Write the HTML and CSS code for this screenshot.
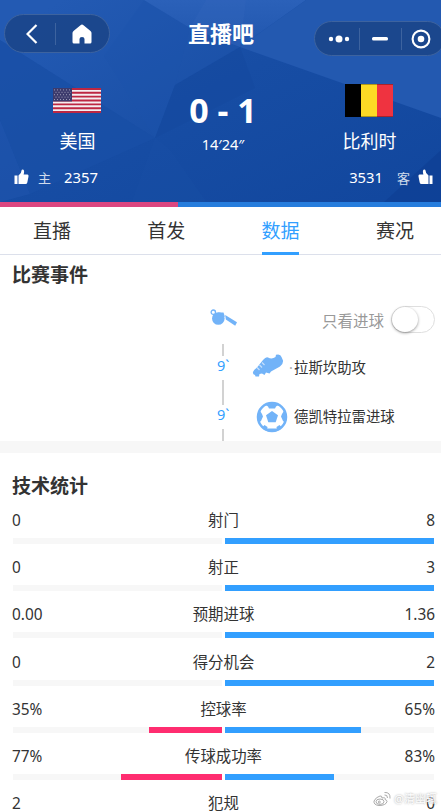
FILE: index.html
```html
<!DOCTYPE html>
<html lang="zh-CN">
<head>
    <meta charset="UTF-8">
    <meta name="viewport" content="width=device-width, initial-scale=1.0">
    <title>直播吧 - 美国 vs 比利时</title>
    <link rel="stylesheet" href="styles.css">
</head>
<body>
    <header class="header">
        <svg class="header-bg" viewBox="0 0 441 207" preserveAspectRatio="none">
            <defs>
                <linearGradient id="bg" x1="0" y1="0" x2="1" y2="1">
                    <stop offset="0" stop-color="#1e55ae"/>
                    <stop offset="0.45" stop-color="#174da4"/>
                    <stop offset="1" stop-color="#11469d"/>
                </linearGradient>
                <linearGradient id="shine" x1="0" y1="0" x2="0" y2="1">
                    <stop offset="0" stop-color="#2b61b9"/>
                    <stop offset="1" stop-color="#2056ae"/>
                </linearGradient>
                <linearGradient id="left" gradientUnits="userSpaceOnUse" x1="60" y1="0" x2="150" y2="140">
                    <stop offset="0" stop-color="#235ab3"/>
                    <stop offset="1" stop-color="#1a50a7"/>
                </linearGradient>
            </defs>
            <rect width="441" height="207" fill="url(#bg)"/>
            <path d="M0 0H144L240 47 175 85 155 138 0 40z" fill="url(#left)"/>
            <path d="M0 40L155 138 30 194 0 120z" fill="#1a50a7" opacity=".7"/>
            <path d="M0 120L30 194 0 202z" fill="#1f55ad" opacity=".6"/>
            <path d="M155 138L104 56 144 0 190 28 175 85z" fill="#1d53ab" opacity=".35"/>
            <path d="M144 0H306L240 47 190 28z" fill="url(#shine)"/>
            <path d="M206 0H246L240 47 190 28z" fill="#3468bd" opacity=".3"/>
            <path d="M306 0H441V118L240 47z" fill="#2359b0"/>
            <path d="M240 47L175 85 155 138 255 88z" fill="#13489e" opacity=".5"/>
            <path d="M155 138L130 207H210L170 150z" fill="#245aae" opacity=".12"/>
            <path d="M441 150L384 202H441z" fill="#0d3d92" opacity=".6"/>
        </svg>

        <div class="topbar">
            <div class="pill pill-left">
                <svg width="12" height="20" viewBox="0 0 12 20"><path d="M10.5 1L1.5 10l9 9" fill="none" stroke="#fff" stroke-width="2.2"/></svg>
                <i class="pill-line"></i>
                <svg width="20" height="20" viewBox="0 0 20 20"><path d="M10 .5q.8 0 1.5.7l7 5.8q1 .8 1 2V18q0 1.500-1.500 1.500H12.500V15q0-2-2.500-2t-2.500 2v4.500H2Q.5 19.500.5 18V9q0-1.200 1-2l7-5.800Q9.200.5 10 .5z" fill="#fff"/></svg>
            </div>
            <div class="logo">直播吧</div>
            <div class="pill pill-right">
                <svg width="22" height="10" viewBox="0 0 22 10"><circle cx="3" cy="5" r="2.200" fill="#fff"/><circle cx="11" cy="5" r="3.500" fill="#fff"/><circle cx="19" cy="5" r="2.200" fill="#fff"/></svg>
                <i class="pill-line"></i>
                <svg width="16" height="4" viewBox="0 0 16 4"><rect width="16" height="3.600" rx="1.500" fill="#fff"/></svg>
                <i class="pill-line"></i>
                <svg width="20" height="20" viewBox="0 0 20 20"><circle cx="10" cy="10" r="8.400" fill="none" stroke="#fff" stroke-width="2.100"/><circle cx="10" cy="10" r="3.300" fill="#fff"/></svg>
            </div>
        </div>

        <div class="match">
            <div class="team">
                <div class="flag">
                    <svg width="48" height="25" viewBox="0 0 48 26" preserveAspectRatio="none">
                        <rect width="48" height="26" fill="#f5eef0"/>
                        <path d="M0 1H48M0 5H48M0 9H48M0 13H48M0 17H48M0 21H48M0 25H48" stroke="#bd2742" stroke-width="2"/>
                        <rect width="19" height="14" fill="#3d3b6d"/>
                        <path d="M1 2H18M2.500 4.500H18M1 7H18M2.500 9.500H18M1 12H18" stroke="#a19fba" stroke-width="1" stroke-dasharray="1 2"/>
                    </svg>
                </div>
                <div class="team-name">美国</div>
            </div>
            <div class="score-box">
                <div class="score">0 - 1</div>
                <div class="clock">14′24″</div>
            </div>
            <div class="team">
                <div class="flag">
                    <svg width="48" height="33" viewBox="0 0 48 33"><path d="M0 0H16V33H0z" fill="#000"/><path d="M16 0H32V33H16z" fill="#fdda25"/><path d="M32 0H48V33H32z" fill="#ef3340"/><path d="M0 .5H48M0 32.500H48" stroke="#000" opacity=".3"/></svg>
                </div>
                <div class="team-name">比利时</div>
            </div>
        </div>

        <div class="votes">
            <div class="vote">
                <svg width="15" height="16" viewBox="0 0 15 16"><path d="M.5 6.500H3.500V15H.5zM4.500 6.500Q7.500 4.500 7.500 1.500 7.600.5 8.700.5 10.500.8 10 4L9.600 5.500H13.500Q14.800 5.700 14.500 7.500L13.300 13.500Q13 15 11.500 15H4.500z" fill="#fff"/></svg>
                <span class="side">主</span>
                <span class="count">2357</span>
            </div>
            <div class="vote">
                <span class="count">3531</span>
                <span class="side">客</span>
                <svg class="flip" width="15" height="16" viewBox="0 0 15 16"><path d="M.5 6.500H3.500V15H.5zM4.500 6.500Q7.500 4.500 7.500 1.500 7.600.5 8.700.5 10.500.8 10 4L9.600 5.500H13.500Q14.800 5.700 14.500 7.500L13.300 13.500Q13 15 11.500 15H4.500z" fill="#fff"/></svg>
            </div>
        </div>
        <div class="vote-bar"><i></i></div>
    </header>

    <nav class="tabs">
        <a class="tab">直播</a>
        <a class="tab">首发</a>
        <a class="tab active">数据</a>
        <a class="tab">赛况</a>
    </nav>

    <section class="events">
        <h2>比赛事件</h2>
        <div class="events-top">
            <svg class="whistle" width="28" height="18" viewBox="0 0 28 18"><circle cx="8.300" cy="9.500" r="6.300" fill="#72b3f8"/><circle cx="3.300" cy="3.200" r="2.200" fill="#fff" stroke="#72b3f8" stroke-width="1.300"/><path d="M8 3.500H13.500L15 8z" fill="#72b3f8"/><path d="M15.200 6L27 13.200 25.200 16.800 15.800 10.500z" fill="#72b3f8"/></svg>
            <span class="only-goal">只看进球</span>
            <span class="switch"><i></i></span>
        </div>
        <div class="timeline">
            <i class="line line-short"></i>
            <div class="event">
                <span class="minute">9`</span>
                <svg class="event-icon boot" width="32" height="24" viewBox="0 0 32 24"><path d="M1 18Q1 16.500 5 13.500L11 6Q14 2.500 16 3.500 20 5.500 23.500 3L24 .8Q28.500-.5 29.500 3L31 6.500Q31.500 10 28 12.500L19 17.500 17.500 19.500 14 18.500 12.500 21 10 19.500 7.500 20 7 22.500H3.500L3 21Q.5 20.500 1 18z" fill="#72b3f8"/><path d="M10 8.500L12.500 11M7.500 11L10 13.500M5 13.500L7.500 16" stroke="#c5dffc" stroke-width="1.300"/></svg>
                <span class="event-text"><b>·</b>拉斯坎助攻</span>
            </div>
            <i class="line"></i>
            <div class="event">
                <span class="minute">9`</span>
                <svg class="event-icon" width="32" height="32" viewBox="0 0 32 32"><circle cx="16" cy="16" r="14" fill="#fff" stroke="#72b3f8" stroke-width="2.500"/><path d="M16 10L22 14.300 19.700 21.200H12.300L10 14.300z" fill="#72b3f8"/><path d="M9 3.500Q16 0 23 3.500L20 5.500 19 7.500H13L12 5.500zM28.500 9Q32 15 29.500 22L27 20 25 15.500 26 13zM26 26.500Q24 29 21 30L20.500 26 23.500 24zM11 30Q8 29 6 26.500L8.500 24 11.500 26zM2.500 22Q0 15 3.500 9L6 13 7 15.500 5 20zM11.500 27.500H20.500V30.500H11.500z" fill="#72b3f8"/></svg>
                <span class="event-text">德凯特拉雷进球</span>
            </div>
            <i class="line line-short"></i>
        </div>
    </section>

    <section class="stats">
        <h2>技术统计</h2>
        <div class="stat">
            <div class="stat-text"><span>0</span><span>射门</span><span>8</span></div>
            <div class="bars"><div class="bar home"></div><div class="bar away"><i style="width: 100%"></i></div></div>
        </div>
        <div class="stat">
            <div class="stat-text"><span>0</span><span>射正</span><span>3</span></div>
            <div class="bars"><div class="bar home"></div><div class="bar away"><i style="width: 100%"></i></div></div>
        </div>
        <div class="stat">
            <div class="stat-text"><span>0.00</span><span>预期进球</span><span>1.36</span></div>
            <div class="bars"><div class="bar home"></div><div class="bar away"><i style="width: 100%"></i></div></div>
        </div>
        <div class="stat">
            <div class="stat-text"><span>0</span><span>得分机会</span><span>2</span></div>
            <div class="bars"><div class="bar home"></div><div class="bar away"><i style="width: 100%"></i></div></div>
        </div>
        <div class="stat">
            <div class="stat-text"><span>35%</span><span>控球率</span><span>65%</span></div>
            <div class="bars"><div class="bar home"><i style="width: 35%"></i></div><div class="bar away"><i style="width: 65%"></i></div></div>
        </div>
        <div class="stat">
            <div class="stat-text"><span>77%</span><span>传球成功率</span><span>83%</span></div>
            <div class="bars"><div class="bar home"><i style="width: 48.4%"></i></div><div class="bar away"><i style="width: 52.2%"></i></div></div>
        </div>
        <div class="stat">
            <div class="stat-text"><span>2</span><span>犯规</span><span>0</span></div>
            <div class="bars"><div class="bar home"></div><div class="bar away"></div></div>
        </div>
    </section>

    <div class="watermark">
        <svg width="18" height="16" viewBox="0 0 18 16" fill="none" stroke="#aaa"><path d="M7 5Q3 6 1 10 .5 14 6 14.500 13 14.500 14 10.500 14 9 12 8.500 13 6 9 7 9 4.500 7 5z" fill="#fff"/><ellipse cx="7" cy="10.700" rx="4" ry="2.700"/><circle cx="6.300" cy="11" r="1"/><path d="M11.500 4Q14.500 3.500 14.500 7M11.500 1.500Q17.500 1 17 7.500"/></svg>
        <span>@清幽辄</span>
    </div>
</body>
</html>
```

FILE: styles.css
```css
* {
    box-sizing: border-box;
}
body {
    margin: 0;
    height: 812px;
    position: relative;
    overflow: hidden;
    background: #fff;
    color: #333;
    font-family: "Noto Sans", "Noto Sans CJK SC", sans-serif;
}
svg {
    display: block;
    flex: none;
}
i {
    display: block;
}

/* header */
.header {
    position: relative;
    height: 207px;
    overflow: hidden;
    color: #fff;
    background: #174da4;
}
.header-bg {
    position: absolute;
    top: 0;
    left: 0;
    width: 100%;
    height: 100%;
}
.topbar {
    position: relative;
    display: flex;
    align-items: flex-start;
    height: 84px;
    padding: 14px 0 0 4px;
}
.pill {
    display: flex;
    align-items: center;
    background: rgba(25, 65, 130, 0.75);
    border: 1px solid #3d639f;
    border-radius: 20px;
}
.pill-left {
    width: 106px;
    height: 39px;
    padding-left: 21px;
}
.pill-left .pill-line {
    margin: 0 16px 0 17px;
}
.pill-line {
    width: 1px;
    height: 22px;
    background: #3d639f;
}
.pill-right {
    width: 131px;
    height: 35px;
    margin: 7px -4px 0 auto;
    padding-left: 13px;
}
.pill-right .pill-line {
    margin: 0 12px 0 9px;
}
.pill-right svg + .pill-line ~ .pill-line {
    margin: 0 9px 0 13px;
}
.logo {
    margin-left: 78px;
    width: 68px;
    font-size: 22px;
    line-height: 38px;
    font-weight: bold;
    white-space: nowrap;
}
.match {
    position: relative;
    display: grid;
    grid-template-columns: 155px 134px 152px;
    height: 76px;
    text-align: center;
}
.flag {
    display: flex;
    align-items: center;
    justify-content: center;
    height: 33px;
    margin-left: -1px;
}
.team-name {
    margin-top: 11px;
    font-size: 18px;
    line-height: 26px;
}
.team:last-child {
    padding-left: 9px;
}
.score-box {
    padding-left: 2px;
}
.score {
    margin-top: 4px;
    font-size: 34px;
    line-height: 44px;
    font-weight: bold;
}
.clock {
    font-size: 14.5px;
    line-height: 24px;
}
.votes {
    position: relative;
    display: flex;
    justify-content: space-between;
    height: 42px;
    padding: 5px 8px 13px 14px;
}
.vote {
    display: flex;
    align-items: center;
}
.side {
    margin: 0 8px 0 9px;
    font-size: 13px;
    opacity: 0.8;
}
.count {
    margin-left: 5px;
    font-size: 14.8px;
}
.vote:last-child .side {
    margin-left: 14px;
}
.flip {
    transform: scaleX(-1);
}
.vote-bar {
    position: relative;
    height: 5px;
    background: #267ddd;
}
.vote-bar i {
    width: 178px;
    height: 5px;
    background: #dc4680;
}

/* tabs */
.tabs {
    display: flex;
    height: 48px;
    margin: 0 -11px 0 0;
    padding-left: 33px;
    border-bottom: 1px solid #dce0eb;
}
.tab {
    width: 37.5px;
    margin-right: 76.8px;
    flex: none;
    font-size: 19px;
    line-height: 49px;
    height: 48px;
    white-space: nowrap;
}
.tab.active {
    color: #329fff;
    border-bottom: 3px solid #329fff;
}

h2 {
    margin: 0;
    font-size: 19px;
    line-height: 28px;
}

/* match events */
.events {
    height: 186px;
    padding: 6px 6px 0 12px;
}
.events-top {
    display: flex;
    align-items: center;
    justify-content: flex-end;
    height: 28px;
    margin-top: 17px;
}
.whistle {
    margin: -4px auto 0 198px;
}
.only-goal {
    color: #999;
    font-size: 15.5px;
}
.switch {
    width: 44px;
    height: 27px;
    margin-left: 7px;
    margin-top: -1px;
    border: 1px solid #dfdfdf;
    border-radius: 14px;
}
.switch i {
    width: 26px;
    height: 25px;
    border-radius: 50%;
    background: #fff;
    box-shadow: 0 1px 3px rgba(0, 0, 0, 0.4);
}
.timeline {
    margin-top: 10px;
}
.line {
    width: 2px;
    height: 25px;
    margin-left: 210px;
    background: #d2d2d2;
}
.line-short {
    height: 12px;
}
.event {
    display: flex;
    align-items: center;
    height: 24px;
    padding-left: 205px;
}
.minute {
    width: 35px;
    color: #329fff;
    font-size: 14.5px;
    line-height: 20px;
    margin-top: -6px;
}
.event-icon {
    margin-left: 4px;
}
.event-text {
    margin: -4px 0 0 6px;
    font-size: 14.4px;
}
.boot {
    margin: -4px 0 0 0;
}
.boot + .event-text {
    margin-left: 5px;
}
.event-text b {
    display: inline-block;
    width: 5px;
    color: #aaa;
    font-weight: normal;
}

/* stats */
.stats {
    border-top: 12px solid #f7f7f7;
    padding: 19px 6px 0 12px;
}
.stat {
    height: 47.2px;
}
.stats h2 {
    margin-bottom: 8px;
}
.stat-text {
    display: grid;
    grid-template-columns: 1fr auto 1fr;
    font-size: 15.4px;
    line-height: 26px;
}
.stat-text span:last-child {
    text-align: right;
}
.bars {
    display: grid;
    grid-template-columns: 1fr 1fr;
    gap: 3px;
    margin-top: 4px;
    padding: 0 1px;
}
.bar {
    display: flex;
    height: 6px;
    background: #f7f7f7;
}
.bar.home {
    justify-content: flex-end;
}
.home i {
    background: #ff2d70;
}
.away i {
    background: #329fff;
}

.watermark {
    position: absolute;
    right: 4px;
    bottom: 4px;
    display: flex;
    align-items: center;
    gap: 3px;
    color: #fff;
    font-size: 11px;
    line-height: 18px;
    text-shadow: 0 0 2px #999;
}
```
